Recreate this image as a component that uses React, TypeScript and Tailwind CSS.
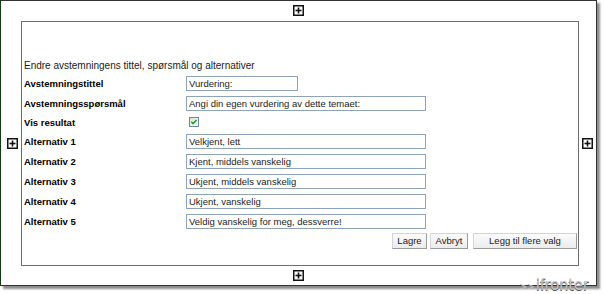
import React from "react";

function PlusIcon() {
  return (
    <svg width="11" height="11" viewBox="0 0 11 11" className="block">
      <rect x="0.75" y="0.75" width="9.5" height="9.5" fill="#fff" stroke="#111" strokeWidth="1.5" />
      <line x1="5.5" y1="2.5" x2="5.5" y2="8.5" stroke="#111" strokeWidth="1.6" />
      <line x1="2.5" y1="5.5" x2="8.5" y2="5.5" stroke="#111" strokeWidth="1.6" />
    </svg>
  );
}

function CheckIcon() {
  return (
    <svg width="10" height="10" viewBox="0 0 10 10" className="block">
      <defs>
        <linearGradient id="cbg" x1="0" y1="0" x2="1" y2="1">
          <stop offset="0" stopColor="#dcdcd6" />
          <stop offset="1" stopColor="#ffffff" />
        </linearGradient>
      </defs>
      <rect x="0.5" y="0.5" width="9" height="9" fill="url(#cbg)" stroke="#6a8aa8" />
      <path d="M2.3 4.8 L4 6.6 L7.6 2.9" fill="none" stroke="#21a121" strokeWidth="1.5" />
    </svg>
  );
}

function Row({ label, children, h = "h-[20px]" }: { label: string; children: React.ReactNode; h?: string }) {
  return (
    <div className={`flex items-center ${h}`}>
      <div className="w-[164px] pl-[2px] font-bold text-black">{label}</div>
      <div className="flex items-center">{children}</div>
    </div>
  );
}

function Field({ value, wide = true }: { value: string; wide?: boolean }) {
  return (
    <div
      className={`${wide ? "w-[240px]" : "w-[112px]"} h-[15px] border border-[#8fa3b8] bg-white pl-[2px] leading-[13px] text-[#222] whitespace-nowrap overflow-hidden`}
    >
      {value}
    </div>
  );
}

function Btn({ children, w }: { children: React.ReactNode; w: string }) {
  return (
    <div
      className={`${w} h-[16px] flex items-center justify-center border border-[#d4d4d4] border-r-[#9a9a9a] border-b-[#9a9a9a] bg-[linear-gradient(#fbfbfb,#ececec)] text-[#222] leading-none`}
    >
      {children}
    </div>
  );
}

export default function App() {
  const alts = [
    "Velkjent, lett",
    "Kjent, middels vanskelig",
    "Ukjent, middels vanskelig",
    "Ukjent, vanskelig",
    "Veldig vanskelig for meg, dessverre!",
  ];
  return (
    <div
      className="relative w-[604px] h-[294px] bg-white text-[9.5px] leading-[11px] text-black overflow-hidden"
      style={{ fontFamily: '"Liberation Sans", Arial, sans-serif' }}
    >
      <div className="w-[597px] h-[286px] border border-[#333] border-l-[#0f3d14] shadow-[3px_3px_2px_rgba(0,0,0,0.45)] flex flex-col bg-white">
        <div className="h-[20px] flex justify-center pt-[4px]">
          <PlusIcon />
        </div>
        <div className="flex h-[245px]">
          <div className="w-[20px] flex items-center pl-[6px]">
            <PlusIcon />
          </div>
          <div className="w-[558px] h-[245px] border border-[#6e6e6e] flex flex-col pt-[38px]">
            <div className="h-[13px] pl-[2px] text-[10px] text-[#1a1a1a]">
              Endre avstemningens tittel, spørsmål og alternativer
            </div>
            <Row label="Avstemningstittel">
              <Field value="Vurdering:" wide={false} />
            </Row>
            <Row label="Avstemningsspørsmål">
              <Field value="Angi din egen vurdering av dette temaet:" />
            </Row>
            <Row label="Vis resultat" h="h-[18px]">
              <div className="pl-[3px]">
                <CheckIcon />
              </div>
            </Row>
            {alts.map((a, i) => (
              <Row key={i} label={`Alternativ ${i + 1}`}>
                <Field value={a} />
              </Row>
            ))}
            <div className="flex justify-end pr-[1px] mt-[2px]">
              <Btn w="w-[35px]">Lagre</Btn>
              <div className="w-[3px]" />
              <Btn w="w-[38px]">Avbryt</Btn>
              <div className="w-[5px]" />
              <Btn w="w-[104px]">Legg til flere valg</Btn>
            </div>
          </div>
          <div className="flex-1 flex items-center pl-[3px]">
            <PlusIcon />
          </div>
        </div>
        <div className="flex-1 flex justify-center pt-[4px]">
          <PlusIcon />
        </div>
      </div>
      <div className="absolute left-[519px] top-[278px] flex items-end text-[#c4c4c4] leading-none select-none" style={{ fontFamily: '"DejaVu Sans", sans-serif' }}>
        <span className="text-[10px] tracking-[-1px] mb-[1px]">&gt;&gt;</span>
        <span className="text-[15px] tracking-[-0.3px] ml-[2px] [text-shadow:0_1px_0_#555]">ifronter</span>
      </div>
    </div>
  );
}
